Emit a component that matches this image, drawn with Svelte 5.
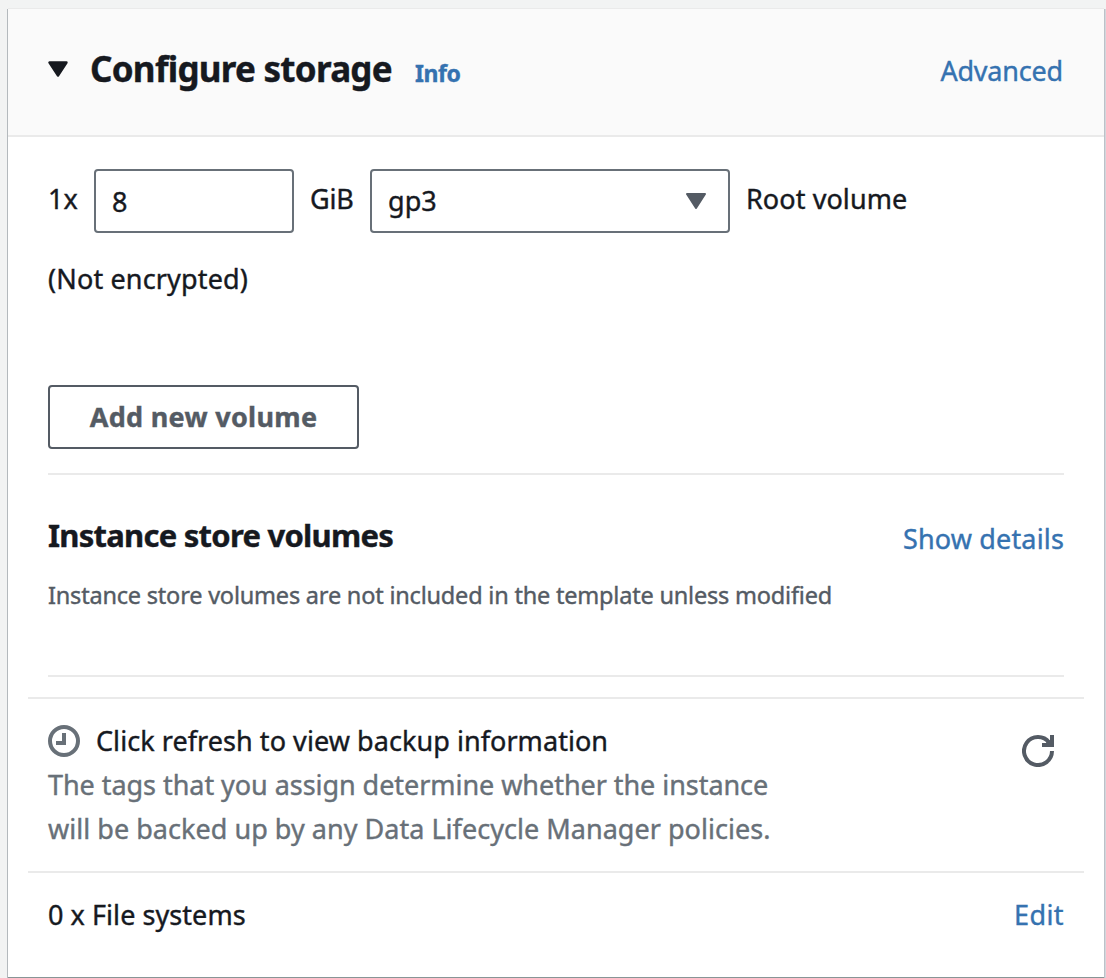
<script>
  let size = $state('8');
</script>

<main class="page">
  <section class="card">
    <header class="card-header">
      <svg class="caret" width="20" height="16" viewBox="0 0 20 16"><path d="M1.5 1.5h17L10 14.5z" /></svg>
      <h2>Configure storage</h2>
      <a class="info" href="#info">Info</a>
      <a class="link advanced" href="#advanced">Advanced</a>
    </header>

    <div class="body">
      <div class="volume">
        <span class="label count">1x</span>
        <input class="field size" bind:value={size} aria-label="Size" />
        <span class="label unit">GiB</span>
        <button class="field select">
          <span>gp3</span>
          <svg width="20" height="16" viewBox="0 0 20 16"><path d="M1 1h18L10 15z" /></svg>
        </button>
        <span class="label root">Root volume</span>
      </div>
      <p class="encrypted">(Not encrypted)</p>
      <button class="add">Add new volume</button>
      <hr />
      <div class="store">
        <h3>Instance store volumes</h3>
        <a class="link details" href="#details">Show details</a>
      </div>
      <p class="note">Instance store volumes are not included in the template unless modified</p>
      <hr />
    </div>

    <div class="backup">
      <div class="backup-text">
        <p class="backup-title">
          <svg width="32" height="32" viewBox="0 0 32 32"><circle cx="16" cy="16" r="14" /><path d="M16 8v10H8" /></svg>
          <span>Click refresh to view backup information</span>
        </p>
        <p class="muted"><span class="first">The tags that you assign determine whether the instance</span><br /><span class="second">will be backed up by any Data Lifecycle Manager policies.</span></p>
      </div>
      <button class="refresh" aria-label="Refresh">
        <svg width="32" height="32" viewBox="0 0 32 32"><path d="M30 16a14 14 0 1 1-2.8-8.4L29 10M30 0v10H20" /><path class="tip" d="M24.5 6.5L28 5v4h-4z" /></svg>
      </button>
    </div>

    <footer class="files">
      <span>0 x File systems</span>
      <a class="link edit" href="#edit">Edit</a>
    </footer>
  </section>
</main>

<style>
  :global(body) {
    margin: 0;
    background: #f2f3f3;
  }
  .page {
    box-sizing: border-box;
    height: 978px;
    padding: 8px 2px 1px 8px;
    overflow: hidden;
    font: 27px/44px 'Noto Sans', sans-serif;
    letter-spacing: 0.06px;
    -webkit-text-stroke: 0.4px currentColor;
    color: #16191f;
  }
  .card {
    height: 969px;
    background: #fff;
    box-shadow: 0 1px 0 #879596, -1px 1px 0 #b4b9bd, 1px 1px 0 #bcc1c8, 2px 1px 0 #d3d7dc;
  }
  h2, h3, p { margin: 0; }
  button { font: inherit; color: inherit; letter-spacing: inherit; padding: 0; background: none; cursor: pointer; }
  a { color: #3572b0; text-decoration: none; }
  .card-header {
    box-sizing: border-box;
    height: 129px;
    display: flex;
    align-items: flex-start;
    padding: 0 41px 0 40px;
    background: #fafafa;
    border-bottom: 2px solid #eaeaea;
    border-top: 1px solid #eaeaea;
  }
  .caret { margin: 52px 23px 0 0; fill: #16191f; stroke: #16191f; stroke-width: 2.4; stroke-linejoin: round; flex: none; }
  h2 { font-size: 35px; line-height: 44px; font-weight: 700; letter-spacing: -0.74px; margin: 38px 0 0 -1px; white-space: nowrap; }
  .info { font-size: 23px; font-weight: 700; letter-spacing: -0.4px; margin: 42px 0 0 23px; }
  .advanced { margin: 40px 0 0 auto; letter-spacing: -0.2px; }
  .body { padding: 32px 40px 0; }
  .volume { display: flex; height: 64px; white-space: nowrap; }
  .label { line-height: 60px; }
  .count { width: 46px; }
  .unit { width: 61px; margin-left: 16px; letter-spacing: -0.2px; }
  .root { margin-left: 16px; letter-spacing: 0.08px; }
  .field {
    box-sizing: border-box;
    height: 64px;
    border: 2px solid #687078;
    border-radius: 4px;
    background: #fff;
    padding: 0 16px;
    font: inherit;
    color: inherit;
    outline: none;
  }
  .size { width: 200px; padding-top: 1px; -webkit-text-stroke: inherit; }
  .select { width: 360px; margin-left: -1px; display: flex; align-items: center; justify-content: space-between; padding: 0 22px 0 16px; }
  .select svg { fill: #545b64; stroke: #545b64; stroke-width: 2; stroke-linejoin: round; }
  .encrypted { margin-top: 24px; letter-spacing: 0.15px; }
  .add {
    display: block;
    box-sizing: border-box;
    width: 311px;
    height: 64px;
    margin-top: 84px;
    border: 2px solid #545b64;
    border-radius: 4px;
    color: #545b64;
    font-weight: 700;
    line-height: 60px;
    letter-spacing: 0.3px;
  }
  hr { border: 0; height: 2px; margin: 24px 0 0; background: #eaeaea; }
  .store { display: flex; justify-content: space-between; padding-top: 38px; height: 60px; }
  h3 { font-size: 31px; font-weight: 700; letter-spacing: -0.75px; line-height: 44px; white-space: nowrap; }
  .details { margin-top: 4px; letter-spacing: 0.15px; }
  .note { color: #545b64; font-size: 23.5px; letter-spacing: -0.2px; white-space: nowrap; }
  .note + hr { margin-top: 58px; }
  .backup {
    display: flex;
    justify-content: space-between;
    box-sizing: border-box;
    height: 174px;
    margin: 20px 20px 0;
    padding: 20px 30px 0 20px;
    border-top: 2px solid #eaeaea;
  }
  .backup-title { display: flex; gap: 16px; align-items: center; white-space: nowrap; }
  .backup-title svg { fill: none; stroke: #687078; stroke-width: 4; }
  .muted { color: #687078; white-space: nowrap; }
  .first { letter-spacing: -0.05px; }
  .second { letter-spacing: 0.03px; }
  .refresh { width: 32px; height: 32px; border: 0; margin-top: 16px; line-height: 0; }
  .refresh svg { fill: none; stroke: #545b64; stroke-width: 4; }
  .refresh .tip { fill: #545b64; stroke: none; }
  .files {
    display: flex;
    justify-content: space-between;
    margin: 0 20px;
    padding: 20px 20px 0;
    border-top: 2px solid #eaeaea;
  }
  .edit { letter-spacing: 0.4px; }
</style>
